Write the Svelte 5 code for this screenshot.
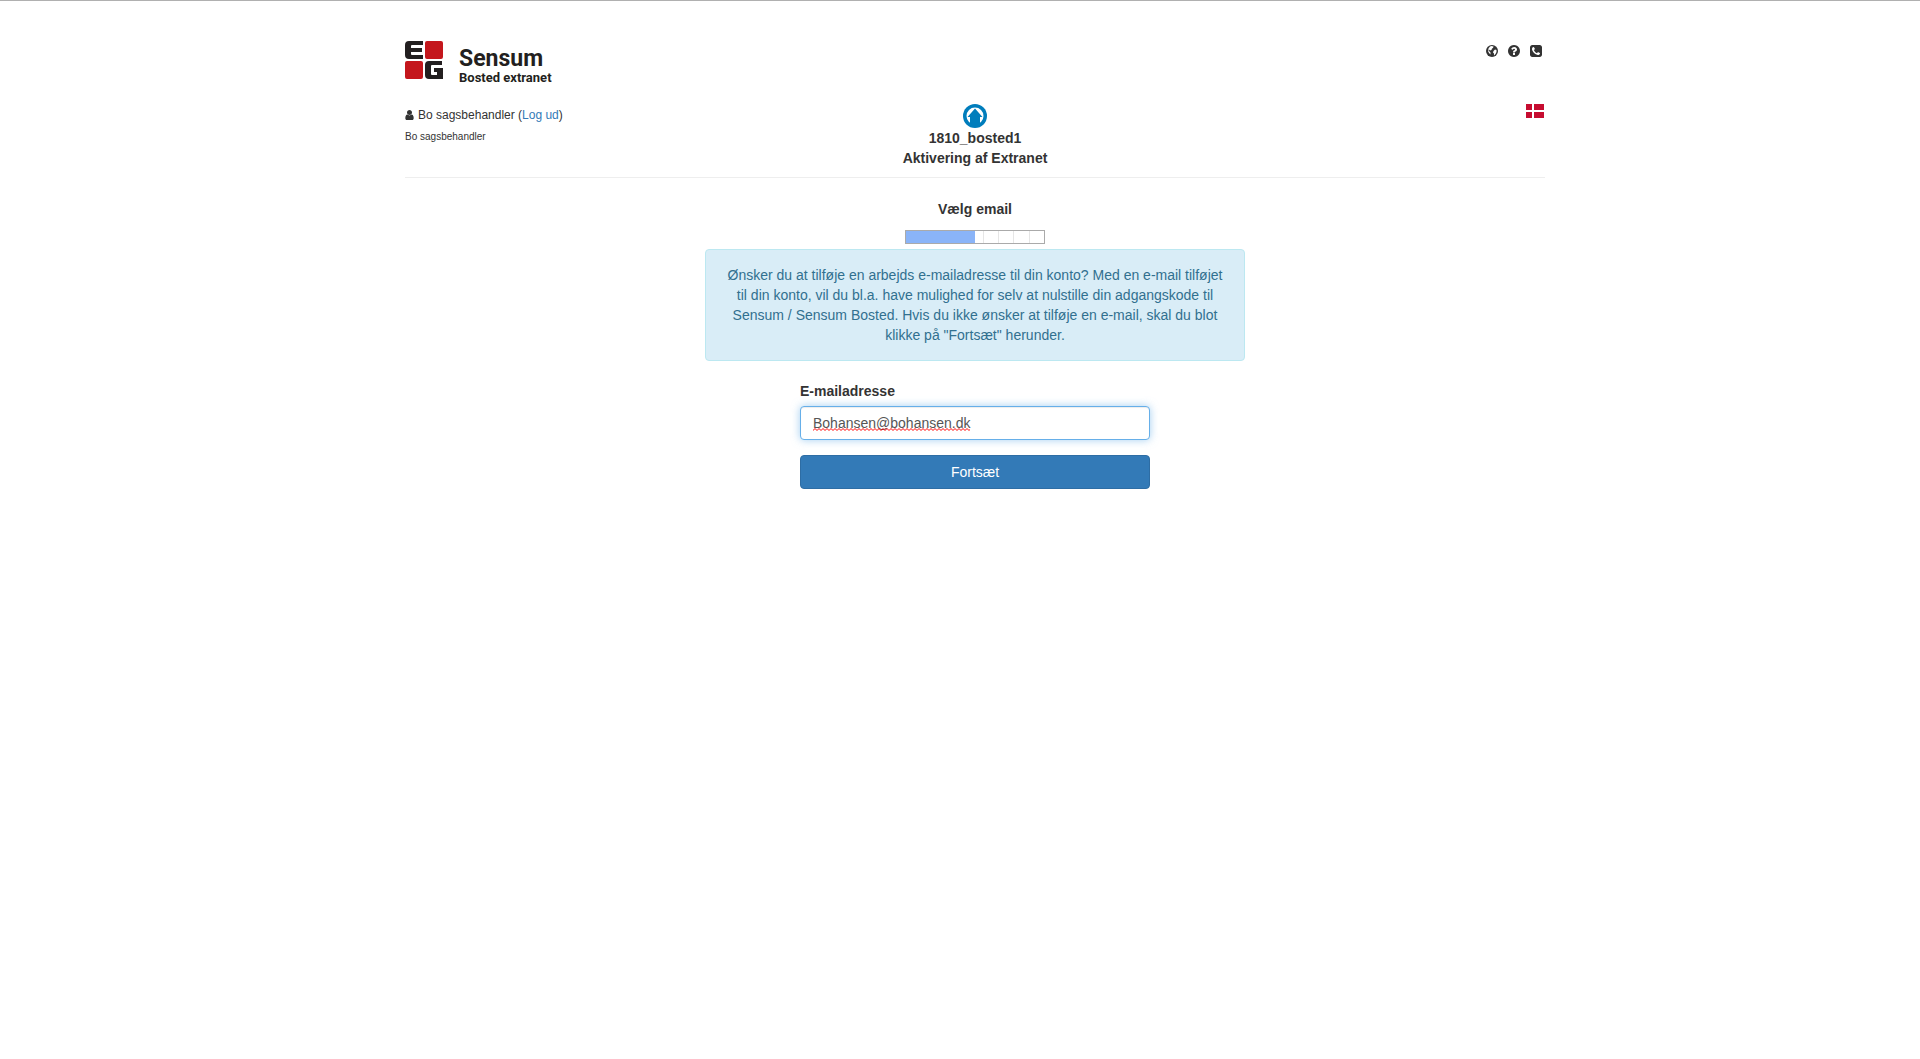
<script lang="ts">
	let email = $state('Bohansen@bohansen.dk');
	const progress = 50;
</script>

<div class="container">
	<header>
		<div class="top">
			<a class="brand" href="#home" aria-label="EG Sensum Bosted extranet">
				<svg class="logo" viewBox="0 0 38 38" aria-hidden="true">
					<path fill="#c4161c" d="M22 0h14q2 0 2 2v14q0 2-2 2H22q-2 0-2-2V2q0-2 2-2zM2 20h14q2 0 2 2v14q0 2-2 2H2q-2 0-2-2V22q0-2 2-2z" />
					<path fill="#231f20" d="M18 0v4H7q-1 0-1 1v2h11v4H6v2q0 1 1 1h11v4H4q-4 0-4-4V4q0-4 4-4zM37 20v4H27q-1 0-1 1v8q0 1 1 1h5v-3h-3v-4h9v11H24q-4 0-4-4V24q0-4 4-4z" />
				</svg>
				<span class="brand-text">
					<span class="brand-name">Sensum</span>
					<span class="brand-sub">Bosted extranet</span>
				</span>
			</a>
			<nav class="tools">
				<a href="#language" aria-label="Sprog">
					<svg viewBox="0 0 12 12">
						<circle cx="6" cy="6" r="6" fill="#333" />
						<path fill="#fff" d="M4 1.500 5.500 1 7.500 1.500 7 3 6 3.500 5.500 5 4 5.500 3 4.500 2.500 5.500 4.500 7.500 4.500 9.500 3 8 2 6 2.500 3.500zM7.500 6 9 4.500l1.500.5V7L9.500 9 8 10.500 8 8.500 7 7.500z" />
					</svg>
				</a>
				<a href="#help" aria-label="Hjælp">
					<svg viewBox="128 128 1536 1536">
						<path fill="#333" d="M1024 1376v-192q0-14-9-23t-23-9h-192q-14 0-23 9t-9 23v192q0 14 9 23t23 9h192q14 0 23-9t9-23zm256-672q0-88-55.500-163t-138.500-116-170-41q-243 0-371 213-15 24 8 42l132 100q7 6 19 6 16 0 25-12 53-68 86-92 34-24 86-24 48 0 85.500 26t37.500 59q0 38-20 61t-68 45q-63 28-115.500 86.500t-52.500 125.500v36q0 14 9 23t23 9h192q14 0 23-9t9-23q0-19 21.500-49.500t54.500-49.500q32-18 49-28.500t46-35 44.500-48 28-60.500 12.500-81zm384 192q0 209-103 385.500t-279.500 279.500-385.500 103-385.500-103-279.500-279.500-103-385.500 103-385.500 279.500-279.500 385.500-103 385.500 103 279.500 279.500 103 385.500z" />
					</svg>
				</a>
				<a href="#contact" aria-label="Kontakt">
					<svg viewBox="128 128 1536 1536">
						<path fill="#333" d="M1408 1193q0-11-2-16t-18-16.500-40.500-25-47.500-26.500-45.500-25-28.500-15q-5-3-19-13t-25-15-21-5q-15 0-36.500 20.500t-39.500 45-38.500 45-33.500 20.500q-7 0-16.500-3.500t-15.500-6.500-17-9.500-14-8.500q-99-55-170-126.500t-127-170.500q-2-3-8.500-14t-9.500-17-6.500-15.500-3.500-16.500q0-13 20.500-33.500t45-38.500 45-39.500 20.500-36.500q0-10-5-21t-15-25-13-19q-3-6-15-28.500t-25-45.500-26.500-47.500-25-40.500-16.500-18-16-2q-48 0-101 22-46 21-80 94.500t-34 130.500q0 16 2.500 34t5 30.500 9 33 10 29.500 12.500 33 11 30q60 164 216.500 320.500t320.500 216.500q6 2 30 11t33 12.500 29.500 10 33 9 30.500 5 34 2.500q57 0 130.500-34t94.500-80q22-53 22-101zm256-777v960q0 119-84.500 203.500t-203.500 84.500h-960q-119 0-203.500-84.500t-84.500-203.500v-960q0-119 84.500-203.500t203.500-84.500h960q119 0 203.500 84.500t84.500 203.500z" />
					</svg>
				</a>
			</nav>
		</div>

		<div class="info">
			<div class="user">
				<div class="user-name">
					<svg class="user-icon" viewBox="256 128 1280 1536" aria-hidden="true">
						<path fill="#333" d="M1536 1399q0 109-62.500 187t-150.500 78h-854q-88 0-150.500-78t-62.500-187q0-85 8.500-160.500t31.500-152 58.500-131 94-89 134.500-34.500q131 128 313 128t313-128q76 0 134.500 34.500t94 89 58.500 131 31.500 152 8.500 160.500zm-256-887q0 159-112.500 271.500t-271.500 112.500-271.500-112.500-112.500-271.500 112.500-271.500 271.500-112.500 271.500 112.500 112.500 271.500z" />
					</svg>
					<span>Bo sagsbehandler (<a href="#logout">Log ud</a>)</span>
				</div>
				<div class="user-role">Bo sagsbehandler</div>
			</div>
			<div class="place">
				<svg class="home" viewBox="0 0 24 24" aria-hidden="true">
					<circle cx="12" cy="12" r="12" fill="#007dbc" />
					<circle cx="12" cy="12" r="8.500" fill="#fff" />
					<path fill="#007dbc" d="M12 4.500l7.500 8.500H17v9H7v-9H4.500z" />
				</svg>
				<strong>1810_bosted1</strong>
				<strong>Aktivering af Extranet</strong>
			</div>
			<div class="locale">
				<button class="flag" type="button" aria-label="Dansk">
					<svg viewBox="0 0 18 14">
						<path fill="#c60c30" d="M0 0h6v6H0zM8 0h10v6H8zM0 8h6v6H0zM8 8h10v6H8z" />
					</svg>
				</button>
			</div>
		</div>
	</header>

	<main>
		<h1>Vælg email</h1>
		<div class="progress" role="progressbar" aria-label="Vælg email" aria-valuenow={progress} aria-valuemin="0" aria-valuemax="100">
			<div class="bar" style:width="{progress}%"></div>
		</div>
		<p class="alert">
			Ønsker du at tilføje en arbejds e-mailadresse til din konto? Med en e-mail tilføjet til din konto, vil du bl.a.
			have mulighed for selv at nulstille din adgangskode til Sensum / Sensum Bosted. Hvis du ikke ønsker at tilføje en
			e-mail, skal du blot klikke på "Fortsæt" herunder.
		</p>
		<form onsubmit={(e) => e.preventDefault()}>
			<label for="email">E-mailadresse</label>
			<div class="field">
				<input id="email" type="text" spellcheck="false" bind:value={email} />
				<svg class="squiggle" aria-hidden="true">
					<defs>
						<pattern id="wave" width="4" height="3" patternUnits="userSpaceOnUse">
							<path d="M-1 1.500 0 2.500 2 .5 4 2.500 5 1.500" fill="none" stroke="#f00" />
						</pattern>
					</defs>
					<rect width="100%" height="3" fill="url(#wave)" />
				</svg>
			</div>
			<button class="submit" type="submit">Fortsæt</button>
		</form>
	</main>
</div>

<style>
	:global(body) {
		margin: 0;
		padding-left: 30px;
		border-top: 1px solid #b0b0b0;
		background: #fff;
		color: #333;
		font: 14px/20px 'Liberation Sans', Arial, sans-serif;
	}

	a {
		color: #337ab7;
		text-decoration: none;
	}

	svg {
		display: block;
	}

	.container {
		box-sizing: border-box;
		max-width: 1170px;
		margin: 0 auto;
		padding: 40px 15px 0;
	}

	header {
		border-bottom: 1px solid #eee;
	}

	.top {
		display: flex;
		justify-content: space-between;
		align-items: flex-start;
		padding-bottom: 19px;
	}

	.brand {
		display: flex;
		gap: 16px;
		color: #231f20;
		font-family: Roboto, 'Open Sans', sans-serif;
		font-weight: 700;
	}

	.logo {
		width: 38px;
		height: 38px;
	}

	.brand-text {
		display: flex;
		flex-direction: column;
		padding-top: 6px;
	}

	.brand-name {
		font-size: 23px;
		line-height: 24px;
	}

	.brand-sub {
		font-size: 13px;
		line-height: 14px;
	}

	.tools {
		display: flex;
		gap: 10px;
		padding: 4px 3px 0 0;
	}

	.tools svg {
		width: 12px;
		height: 12px;
	}

	.info {
		display: grid;
		grid-template-columns: 1fr auto 1fr;
		padding-bottom: 9px;
	}

	.user-name {
		display: flex;
		align-items: center;
		gap: 4px;
		padding-top: 1px;
		font-size: 12px;
	}

	.user-icon {
		width: 9px;
		height: 10px;
	}

	.user-role {
		font-size: 10px;
		line-height: 24px;
	}

	.place {
		display: flex;
		flex-direction: column;
		align-items: center;
	}

	.home {
		width: 24px;
		height: 24px;
	}

	.locale {
		display: flex;
		justify-content: flex-end;
		align-items: flex-start;
	}

	.flag {
		padding: 0 1px 0 0;
		border: 0;
		background: none;
		cursor: pointer;
	}

	.flag svg {
		width: 18px;
		height: 14px;
	}

	main {
		display: flex;
		flex-direction: column;
		align-items: center;
		padding-top: 21px;
	}

	h1 {
		margin: 0 0 11px;
		font-size: 14px;
		line-height: 20px;
	}

	.progress {
		box-sizing: border-box;
		width: 140px;
		height: 14px;
		margin-bottom: 5px;
		border: 1px solid #aaa;
		background: repeating-linear-gradient(to right, #e6e6e6 0 1px, #fff 1px calc(100% / 9));
	}

	.bar {
		height: 100%;
		background: #8ab4f8;
	}

	.alert {
		box-sizing: border-box;
		width: 100%;
		max-width: 540px;
		margin: 0 0 20px;
		padding: 15px;
		border: 1px solid #bce8f1;
		border-radius: 4px;
		background: #d9edf7;
		color: #31708f;
		text-align: center;
	}

	form {
		display: flex;
		flex-direction: column;
		width: 100%;
		max-width: 350px;
	}

	label {
		margin-bottom: 5px;
		font-weight: 700;
	}

	.field {
		position: relative;
		display: flex;
		margin-bottom: 15px;
	}

	input {
		box-sizing: border-box;
		width: 100%;
		height: 34px;
		padding: 6px 12px;
		border: 1px solid #66afe9;
		border-radius: 4px;
		outline: 0;
		box-shadow:
			inset 0 1px 1px rgba(0, 0, 0, 0.075),
			0 0 8px rgba(102, 175, 233, 0.6);
		color: #555;
		font: inherit;
	}

	/* spelling mark under the address */
	.squiggle {
		position: absolute;
		top: 22px;
		left: 13px;
		width: 157px;
		height: 3px;
		pointer-events: none;
	}

	.submit {
		padding: 6px 12px;
		border: 1px solid #2e6da4;
		border-radius: 4px;
		background: #337ab7;
		color: #fff;
		font: inherit;
		cursor: pointer;
	}
</style>
